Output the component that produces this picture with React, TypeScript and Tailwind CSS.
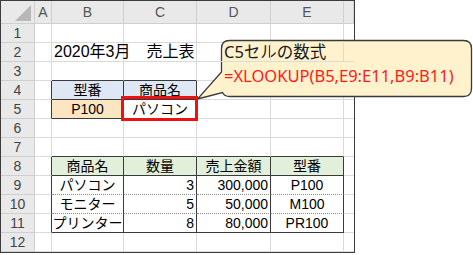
import type { ReactNode } from 'react';

type Cell = { text?: string; align?: 'left' | 'center' | 'right'; bg?: string };

const COL_LABELS = ['A', 'B', 'C', 'D', 'E', ''];
const ROWS = [1, 2, 3, 4, 5, 6, 7, 8, 9, 10, 11, 12];

// sheet contents keyed by "row-col" (col index: A=0 ... E=4)
const cells: Record<string, Cell> = {
  '2-1': { text: '2020年3月　売上表', align: 'left' },
  '4-1': { text: '型番', bg: 'bg-[#dde8f4]' },
  '4-2': { text: '商品名', bg: 'bg-[#dde8f4]' },
  '5-1': { text: 'P100', bg: 'bg-[#fce6c2]' },
  '5-2': { text: 'パソコン' },
  '8-1': { text: '商品名', bg: 'bg-[#e2efda]' },
  '8-2': { text: '数量', bg: 'bg-[#e2efda]' },
  '8-3': { text: '売上金額', bg: 'bg-[#e2efda]' },
  '8-4': { text: '型番', bg: 'bg-[#e2efda]' },
  '9-1': { text: 'パソコン' },
  '9-2': { text: '3', align: 'right' },
  '9-3': { text: '300,000', align: 'right' },
  '9-4': { text: 'P100' },
  '10-1': { text: 'モニター' },
  '10-2': { text: '5', align: 'right' },
  '10-3': { text: '50,000', align: 'right' },
  '10-4': { text: 'M100' },
  '11-1': { text: 'プリンター' },
  '11-2': { text: '8', align: 'right' },
  '11-3': { text: '80,000', align: 'right' },
  '11-4': { text: 'PR100' },
};

const inTable = (r: number, c: number) =>
  (r >= 4 && r <= 5 && c >= 1 && c <= 2) || (r >= 8 && r <= 11 && c >= 1 && c <= 4);

const rightBorder = (r: number, c: number) => {
  if (c === 5) return 'border-r-0';
  return inTable(r, c) || inTable(r, c + 1) ? 'border-r-[#3a3a3a]' : 'border-r-[#dadada]';
};

const bottomBorder = (r: number, c: number) => {
  if (inTable(r, c) && (r === 9 || r === 10)) return 'border-b-[#8c8c8c] [border-bottom-style:dotted]';
  return inTable(r, c) || inTable(r + 1, c) ? 'border-b-[#3a3a3a]' : 'border-b-[#dadada]';
};

const alignClass = (a?: string) =>
  a === 'left' ? 'justify-start pl-[2px]' : a === 'right' ? 'justify-end pr-[2px]' : 'justify-center';

function HeaderCell({ children }: { children?: ReactNode }) {
  return (
    <div className="flex items-center justify-center bg-[#e9e9e9] border-r border-b border-r-[#d0d0d0] border-b-[#cfcfcf] text-[14px] text-[#555]">
      {children}
    </div>
  );
}

function Callout() {
  return (
    <>
      <svg className="absolute left-0 top-0 pointer-events-none" width="473" height="255" viewBox="0 0 473 255">
        <path
          d="M229.5 40.5 H463.5 Q471.5 40.5 471.5 48.5 V88.5 Q471.5 96.5 463.5 96.5 H229.5 Q224.5 96.5 222.5 92.5 L197.5 99 L221.5 72 V48.5 Q221.5 40.5 229.5 40.5 Z"
          fill="#fff2cd"
          stroke="#3a3a3a"
          strokeWidth="1.3"
        />
      </svg>
      <div className="absolute left-[224px] top-[40px] font-['Noto_Sans','Noto_Sans_CJK_JP',sans-serif] text-[16.5px] leading-[24px]">
        <div className="text-[#1a1a1a]">C5セルの数式</div>
        <div className="text-[#ff1a1a]">=XLOOKUP(B5,E9:E11,B9:B11)</div>
      </div>
    </>
  );
}

export default function App() {
  return (
    <div className="relative w-[473px] h-[255px] bg-white overflow-hidden">
      <div className="w-[355px] border border-[#3c3c3c] grid grid-cols-[34px_17px_72px_73px_74px_73px_10px] grid-rows-[23px_repeat(12,19px)] font-['Liberation_Sans','Noto_Sans_CJK_JP',sans-serif] text-[14px] text-black">
        {/* corner */}
        <div className="bg-[#e9e9e9] border-r border-b border-r-[#d0d0d0] border-b-[#cfcfcf]">
          <svg width="33" height="22" viewBox="0 0 33 22">
            <polygon points="14,20 30,20 30,4" fill="#b8b8b8" />
          </svg>
        </div>
        {COL_LABELS.map((l, i) => (
          <HeaderCell key={i}>{l}</HeaderCell>
        ))}

        {ROWS.map((r) => [
          <HeaderCell key={`h${r}`}>
            <span className="text-[#444]">{r}</span>
          </HeaderCell>,
          ...COL_LABELS.map((_, c) => {
            const cell = cells[`${r}-${c}`] ?? {};
            return (
              <div
                key={`${r}-${c}`}
                className={`relative flex items-center whitespace-nowrap border-r border-b ${rightBorder(r, c)} ${bottomBorder(r, c)} ${alignClass(cell.align)} ${cell.bg ?? ''} ${r === 2 ? 'text-[16px] overflow-visible z-10' : ''}`}
              >
                {cell.text}
                {r === 5 && c === 2 && (
                  <div className="absolute -left-[3px] -right-[2px] -top-[4px] -bottom-[3px] border-[3px] border-[#ee1111] z-10" />
                )}
              </div>
            );
          }),
        ])}
      </div>
      <Callout />
    </div>
  );
}
